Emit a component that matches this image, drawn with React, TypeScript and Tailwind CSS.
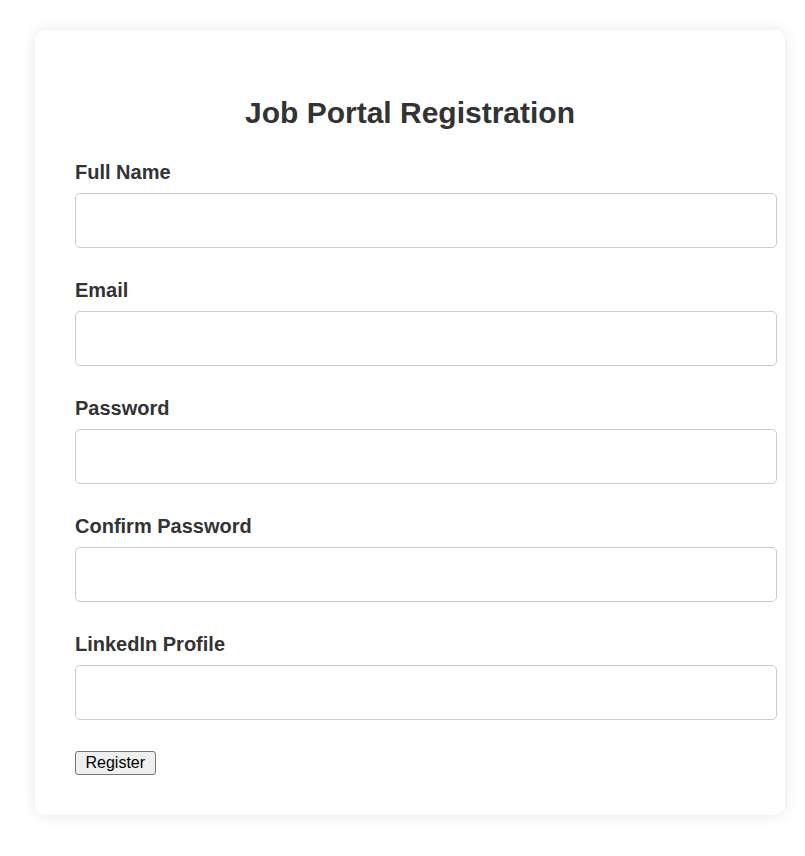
export default function App() {
  const fields = [
    { label: "Full Name", type: "text" },
    { label: "Email", type: "email" },
    { label: "Password", type: "password" },
    { label: "Confirm Password", type: "password" },
    { label: "LinkedIn Profile", type: "url" },
  ];

  return (
    <div className="min-h-screen bg-white pt-[30px] pl-[35px] font-['Liberation_Sans',Arial,sans-serif]">
      <div className="w-[750px] rounded-[10px] bg-white px-[40px] pt-[40px] pb-[40px] shadow-[0_0_15px_rgba(0,0,0,0.1)]">
        <h2 className="mt-[26px] mb-[31px] text-center text-[30px] leading-[34px] font-bold text-[#333]">
          Job Portal Registration
        </h2>
        <form onSubmit={(e) => e.preventDefault()}>
          {fields.map((f) => (
            <div key={f.label} className="mb-[31px]">
              <label className="mb-[10px] block text-[20px] leading-[22px] font-bold text-[#333]">
                {f.label}
              </label>
              <input
                type={f.type}
                className="block h-[55px] w-[702px] rounded-[5px] border border-[#ccc] bg-white px-[15px] text-[16px] outline-none"
              />
            </div>
          ))}
          <button
            type="submit"
            className="h-[24px] rounded-[3px] border border-[#767676] bg-[#efefef] px-[9.5px] text-[16px] leading-[18px] text-black"
          >
            Register
          </button>
        </form>
      </div>
    </div>
  );
}
